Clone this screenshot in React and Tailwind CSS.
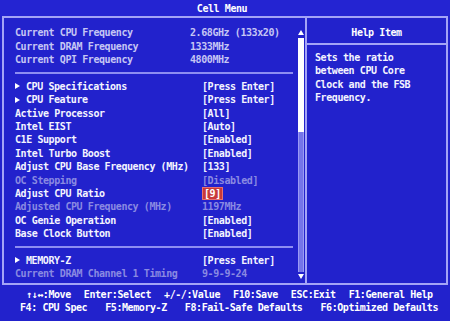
import React from "react";

const rows = [
  { label: "Current CPU Frequency", value: "2.68GHz (133x20)", tone: "info" },
  { label: "Current DRAM Frequency", value: "1333MHz", tone: "info" },
  { label: "Current QPI Frequency", value: "4800MHz", tone: "info" },
  { sep: true },
  { label: "CPU Specifications", value: "[Press Enter]", sub: true },
  { label: "CPU Feature", value: "[Press Enter]", sub: true },
  { label: "Active Processor", value: "[All]" },
  { label: "Intel EIST", value: "[Auto]" },
  { label: "C1E Support", value: "[Enabled]" },
  { label: "Intel Turbo Boost", value: "[Enabled]" },
  { label: "Adjust CPU Base Frequency (MHz)", value: "[133]" },
  { label: "OC Stepping", value: "[Disabled]", tone: "dim" },
  { label: "Adjust CPU Ratio", value: "[9]", selected: true },
  { label: "Adjusted CPU Frequency (MHz)", value: "1197MHz", tone: "dim" },
  { label: "OC Genie Operation", value: "[Enabled]" },
  { label: "Base Clock Button", value: "[Enabled]" },
  { sep: true },
  { label: "MEMORY-Z", value: "[Press Enter]", sub: true },
  { label: "Current DRAM Channel 1 Timing", value: "9-9-9-24", tone: "dim" },
];

const Triangle = ({ up, down }) => {
  if (up)
    return (
      <svg width="6" height="5" viewBox="0 0 6 5">
        <polygon points="3,0 6,5 0,5" fill="#ffffff" />
      </svg>
    );
  if (down)
    return (
      <svg width="6" height="5" viewBox="0 0 6 5">
        <polygon points="0,0 6,0 3,5" fill="#ffffff" />
      </svg>
    );
  return (
    <svg width="5" height="6" viewBox="0 0 5 6">
      <polygon points="0,0 5,3 0,6" fill="#ffffff" />
    </svg>
  );
};

const Row = ({ row }) => {
  if (row.sep) {
    return (
      <div className="h-[13.4px] flex items-center pr-[4px]">
        <div className="w-full h-[2px] bg-[#8e8ef2]" />
      </div>
    );
  }
  const color =
    row.tone === "info"
      ? "text-[#c6c6f4]"
      : row.tone === "dim"
      ? "text-[#8a8ae2]"
      : "text-[#f4f4ff]";
  return (
    <div className={`h-[13.4px] flex items-center whitespace-pre ${color}`}>
      <div className={row.tone === "info" ? "w-[175px]" : "w-[187px]"}>
        {row.sub ? (
          <span className="flex items-center">
            <span className="w-[11px] flex items-center">
              <Triangle />
            </span>
            {row.label}
          </span>
        ) : (
          row.label
        )}
      </div>
      {row.selected ? (
        <span className="bg-[#c83a3a] border border-[#e87070] px-[1px] leading-[11px] text-white">
          {row.value}
        </span>
      ) : (
        <span>{row.value}</span>
      )}
    </div>
  );
};

const App = () => {
  return (
    <div
      className="w-[450px] h-[321px] bg-[#2222cc] flex flex-col overflow-hidden text-[10px] font-bold tracking-[-0.42px] text-white"
      style={{ fontFamily: '"DejaVu Sans Mono", "Liberation Mono", monospace' }}
    >
      {/* Title */}
      <div className="h-[16px] flex items-center justify-center bg-[#2424d2] pr-[6px]">
        Cell Menu
      </div>

      {/* Main frame */}
      <div className="px-[2px] h-[269px]">
        <div className="h-full border-2 border-[#a4a4f6] flex">
          {/* Settings list */}
          <div className="w-[293px] pl-[11px] pt-[8px]">
            {rows.map((row, i) => (
              <Row key={i} row={row} />
            ))}
          </div>

          {/* Scrollbar */}
          <div className="w-[8px] flex flex-col items-center pt-[12px] pb-[4px]">
            <Triangle up />
            <div className="mt-[3px] w-[6px] h-[94px] bg-white" />
            <div className="w-[6px] flex-1 bg-[#7474ea] border-x border-[#9a9af4]" />
            <div className="mt-[2px]">
              <Triangle down />
            </div>
          </div>

          {/* Help panel */}
          <div className="flex-1 border-l-2 border-[#a4a4f6] flex flex-col">
            <div className="h-[27px] pt-[8px] border-b-2 border-[#a4a4f6] text-center leading-[13.4px]">
              Help Item
            </div>
            <div className="pl-[8px] pt-[6px] leading-[13.4px] text-[#f4f4ff]">
              Sets the ratio
              <br />
              between CPU Core
              <br />
              Clock and the FSB
              <br />
              Frequency.
            </div>
          </div>
        </div>
      </div>

      {/* Footer */}
      <div className="flex-1 pt-[3px] leading-[13.4px] whitespace-pre">
        <div className="flex gap-[13px] pl-[26px]">
          <span>↑↓↔:Move</span>
          <span>Enter:Select</span>
          <span>+/-/:Value</span>
          <span>F10:Save</span>
          <span>ESC:Exit</span>
          <span>F1:General Help</span>
        </div>
        <div className="flex gap-[18px] pl-[20px]">
          <span>F4: CPU Spec</span>
          <span>F5:Memory-Z</span>
          <span>F8:Fail-Safe Defaults</span>
          <span>F6:Optimized Defaults</span>
        </div>
      </div>
    </div>
  );
};

export default App;
